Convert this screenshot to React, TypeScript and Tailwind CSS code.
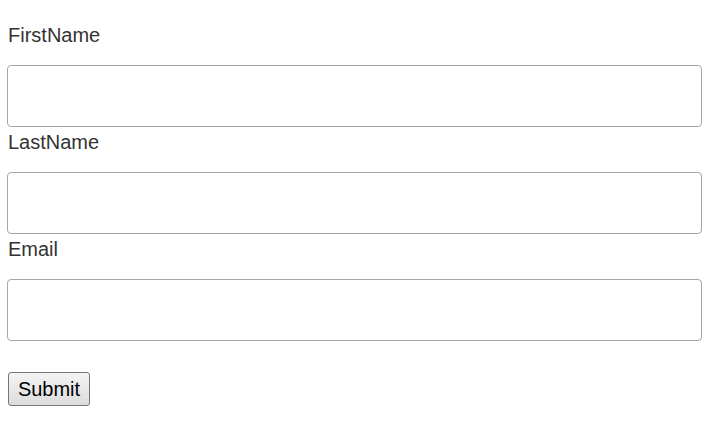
import { useState } from "react";

export default function App() {
  const [form, setForm] = useState({ firstName: "", lastName: "", email: "" });

  const fields: { key: keyof typeof form; label: string; type: string }[] = [
    { key: "firstName", label: "FirstName", type: "text" },
    { key: "lastName", label: "LastName", type: "text" },
    { key: "email", label: "Email", type: "email" },
  ];

  return (
    <div className="min-h-screen bg-white pt-[20px] pl-[7px] font-['Liberation_Sans',Arial,sans-serif]">
      <form onSubmit={(e) => e.preventDefault()}>
        {fields.map((f) => (
          <div key={f.key}>
            <label
              htmlFor={f.key}
              className="block pl-[1px] text-[20px] leading-[30px] mb-[15px] text-[#333333]"
            >
              {f.label}
            </label>
            <input
              id={f.key}
              type={f.type}
              value={form[f.key]}
              onChange={(e) => setForm({ ...form, [f.key]: e.target.value })}
              className="block w-[695px] h-[62px] px-3 border border-[#a6a6a6] rounded-[4px] bg-white text-[20px] outline-none"
            />
          </div>
        ))}

        {/* Submit */}
        <button
          type="submit"
          className="block mt-[31px] ml-[1px] h-[34px] w-[82px] text-[20px] leading-none text-black border border-[#767676] rounded-[3px] bg-gradient-to-b from-[#f4f4f4] to-[#dcdcdc]"
        >
          Submit
        </button>
      </form>
    </div>
  );
}
